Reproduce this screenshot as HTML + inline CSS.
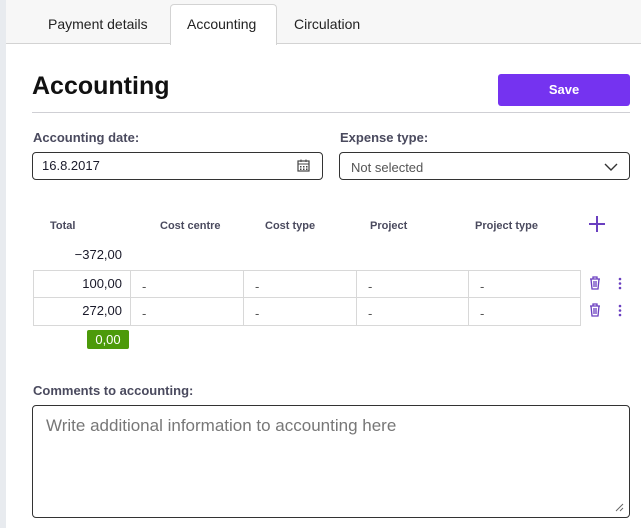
<!DOCTYPE html>
<html><head><meta charset="utf-8"><style>
*{box-sizing:border-box;margin:0;padding:0}
body{width:641px;height:528px;overflow:hidden;background:#fff;font-family:"Liberation Sans",sans-serif;color:#1a1a2a;position:relative}
.a{position:absolute}
.lbl{font-size:13px;font-weight:bold;color:#4a4a5e}
.th{font-size:11px;font-weight:bold;color:#4a4a5e;top:220px}
.num{position:absolute;left:40px;width:82px;text-align:right;font-size:13px}
.d{position:absolute;font-size:13px;color:#555}
</style></head><body>
<div class="a" style="left:0;top:0;width:6px;height:528px;background:#e8ebef"></div>
<div class="a" style="left:6px;top:0;width:635px;height:44px;background:#f7f7f7;border-bottom:1px solid #d3d3d3"></div>
<div class="a" style="left:170px;top:4px;width:107px;height:41px;background:#fff;border:1px solid #d3d3d3;border-bottom:none;border-radius:4px 4px 0 0"></div>
<div class="a" style="left:48px;top:16px;font-size:14px;color:#222">Payment details</div>
<div class="a" style="left:187px;top:16px;font-size:14px;color:#222">Accounting</div>
<div class="a" style="left:294px;top:16px;font-size:14px;color:#222">Circulation</div>
<div class="a" style="left:32px;top:72px;font-size:25px;font-weight:bold;color:#111">Accounting</div>
<div class="a" style="left:498px;top:74px;width:132px;height:32px;background:#7533f0;border-radius:3px;color:#fff;font-size:13px;font-weight:bold;text-align:center;line-height:32px">Save</div>
<div class="a" style="left:32px;top:112px;width:598px;height:1px;background:#cfcfd4"></div>
<div class="a lbl" style="left:33px;top:130px">Accounting date:</div>
<div class="a lbl" style="left:340px;top:130px">Expense type:</div>
<div class="a" style="left:32px;top:152px;width:291px;height:28px;border:1px solid #333;border-radius:4px;font-size:13px;padding:5px 9px">16.8.2017</div>
<svg class="a" style="left:297px;top:159px" width="13" height="13" viewBox="0 0 13 13"><rect x="1" y="2" width="11" height="10" fill="none" stroke="#444" stroke-width="1.2"/><line x1="1" y1="5" x2="12" y2="5" stroke="#444"/><g fill="#444"><rect x="3" y="7" width="1.5" height="1.5"/><rect x="6" y="7" width="1.5" height="1.5"/><rect x="9" y="7" width="1.5" height="1.5"/><rect x="3" y="9.5" width="1.5" height="1.5"/><rect x="6" y="9.5" width="1.5" height="1.5"/><rect x="9" y="9.5" width="1.5" height="1.5"/></g><line x1="4" y1="0.5" x2="4" y2="3" stroke="#444"/><line x1="9" y1="0.5" x2="9" y2="3" stroke="#444"/></svg>
<div class="a" style="left:339px;top:152px;width:291px;height:28px;border:1px solid #333;border-radius:4px;font-size:13px;padding:7px 11px;color:#555">Not selected</div>
<svg class="a" style="left:604px;top:163px" width="14" height="9"><polyline points="1,1 7,7 13,1" fill="none" stroke="#333" stroke-width="1.4"/></svg>
<div class="a th" style="left:50px">Total</div>
<div class="a th" style="left:160px">Cost centre</div>
<div class="a th" style="left:265px">Cost type</div>
<div class="a th" style="left:370px">Project</div>
<div class="a th" style="left:475px">Project type</div>
<svg class="a" style="left:589px;top:216px" width="16" height="16"><path d="M8 0V16M0 8H16" stroke="#6a3fc0" stroke-width="2"/></svg>
<div class="num" style="top:247px">−372,00</div>
<div class="a" style="left:33px;top:270px;width:548px;height:56px;border:1px solid #d8d8d8"></div>
<div class="a" style="left:33px;top:297px;width:548px;height:1px;background:#d8d8d8"></div>
<div class="a" style="left:130px;top:270px;width:1px;height:56px;background:#d8d8d8"></div>
<div class="a" style="left:243px;top:270px;width:1px;height:56px;background:#d8d8d8"></div>
<div class="a" style="left:356px;top:270px;width:1px;height:56px;background:#d8d8d8"></div>
<div class="a" style="left:468px;top:270px;width:1px;height:56px;background:#d8d8d8"></div>
<div class="num" style="top:276px">100,00</div>
<div class="num" style="top:303px">272,00</div>
<div class="d" style="left:142px;top:279px">-</div>
<div class="d" style="left:255px;top:279px">-</div>
<div class="d" style="left:368px;top:279px">-</div>
<div class="d" style="left:480px;top:279px">-</div>
<div class="d" style="left:142px;top:306px">-</div>
<div class="d" style="left:255px;top:306px">-</div>
<div class="d" style="left:368px;top:306px">-</div>
<div class="d" style="left:480px;top:306px">-</div>
<svg class="a" style="left:589px;top:276px" width="12" height="14"><path d="M1 3H11M4 3V1H8V3M2 3L3 13H9L10 3M5 5V11M7 5V11" fill="none" stroke="#6a3fc0" stroke-width="1.3"/></svg>
<svg class="a" style="left:589px;top:303px" width="12" height="14"><path d="M1 3H11M4 3V1H8V3M2 3L3 13H9L10 3M5 5V11M7 5V11" fill="none" stroke="#6a3fc0" stroke-width="1.3"/></svg>
<svg class="a" style="left:618px;top:277px" width="4" height="13"><circle cx="2" cy="2" r="1.3" fill="#6a3fc0"/><circle cx="2" cy="6.5" r="1.3" fill="#6a3fc0"/><circle cx="2" cy="11" r="1.3" fill="#6a3fc0"/></svg>
<svg class="a" style="left:618px;top:304px" width="4" height="13"><circle cx="2" cy="2" r="1.3" fill="#6a3fc0"/><circle cx="2" cy="6.5" r="1.3" fill="#6a3fc0"/><circle cx="2" cy="11" r="1.3" fill="#6a3fc0"/></svg>
<div class="a" style="left:87px;top:330px;width:42px;height:19px;background:#4c9a0a;border-radius:2px;color:#fff;font-size:13px;text-align:center;line-height:19px">0,00</div>
<div class="a lbl" style="left:33px;top:383px">Comments to accounting:</div>
<div class="a" style="left:32px;top:405px;width:598px;height:113px;border:1px solid #333;border-radius:4px;padding:10px 13px;font-size:17px;color:#777">Write additional information to accounting here</div>
<svg class="a" style="left:615px;top:503px" width="9" height="9"><path d="M1 8L8 1M5 8L8 5" stroke="#666"/></svg>
</body></html>
